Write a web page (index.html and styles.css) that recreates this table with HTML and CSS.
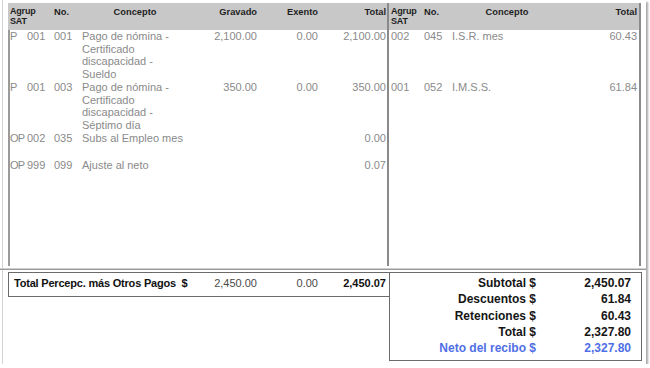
FILE: index.html
```html
<!DOCTYPE html>
<html lang="es">
<head>
<meta charset="utf-8">
<title>Recibo de nómina</title>
<link rel="stylesheet" href="styles.css">
</head>
<body>
<div class="sheet">
  <div class="top">
    <section class="panel left">
      <div class="hdr lgrid">
        <div class="h agrup">Agrup<br>SAT</div>
        <div class="h">No.</div>
        <div class="h ctr">Concepto</div>
        <div class="h num">Gravado</div>
        <div class="h num">Exento</div>
        <div class="h num tot">Total</div>
      </div>
      <div class="body lbody">
        <div class="row lgrid h4">
          <div class="c type">P</div><div class="c">001</div><div class="c">001</div>
          <div class="c">Pago de nómina - Certificado discapacidad - Sueldo</div>
          <div class="c num">2,100.00</div><div class="c num">0.00</div><div class="c num tot">2,100.00</div>
        </div>
        <div class="row lgrid h4">
          <div class="c type">P</div><div class="c">001</div><div class="c">003</div>
          <div class="c">Pago de nómina - Certificado discapacidad - Séptimo día</div>
          <div class="c num">350.00</div><div class="c num">0.00</div><div class="c num tot">350.00</div>
        </div>
        <div class="row lgrid h2">
          <div class="c type">OP</div><div class="c">002</div><div class="c">035</div>
          <div class="c">Subs al Empleo mes</div>
          <div class="c num"></div><div class="c num"></div><div class="c num tot">0.00</div>
        </div>
        <div class="row lgrid h2">
          <div class="c type">OP</div><div class="c">999</div><div class="c">099</div>
          <div class="c">Ajuste al neto</div>
          <div class="c num"></div><div class="c num"></div><div class="c num tot">0.07</div>
        </div>
      </div>
    </section>
    <section class="panel right">
      <div class="hdr rgrid">
        <div class="h agrup">Agrup<br>SAT</div>
        <div class="h">No.</div>
        <div class="h ctr">Concepto</div>
        <div class="h num">Total</div>
      </div>
      <div class="body">
        <div class="row rgrid h4">
          <div class="c">002</div><div class="c">045</div>
          <div class="c">I.S.R. mes</div>
          <div class="c num">60.43</div>
        </div>
        <div class="row rgrid h4">
          <div class="c">001</div><div class="c">052</div>
          <div class="c">I.M.S.S.</div>
          <div class="c num">61.84</div>
        </div>
      </div>
    </section>
  </div>
  <div class="sep"></div>
  <div class="bottom">
    <div class="perc">
      <div class="plabel">Total Percepc. más Otros Pagos&nbsp; $</div>
      <div class="pnum">2,450.00</div>
      <div class="pnum">0.00</div>
      <div class="pnum ptot">2,450.07</div>
    </div>
    <div class="summary">
      <div class="slabel">Subtotal $</div><div class="sval">2,450.07</div>
      <div class="slabel">Descuentos $</div><div class="sval">61.84</div>
      <div class="slabel">Retenciones $</div><div class="sval">60.43</div>
      <div class="slabel">Total $</div><div class="sval">2,327.80</div>
      <div class="slabel neto">Neto del recibo $</div><div class="sval neto">2,327.80</div>
    </div>
  </div>
</div>
</body>
</html>
```
FILE: styles.css
```css
html, body {
  margin: 0;
  padding: 0;
  background: #ffffff;
}
body {
  font-family: "Liberation Sans", Arial, sans-serif;
}
.sheet {
  margin-left: 2px;
  width: 644px;
  height: 364px;
  box-sizing: border-box;
  border-left: 1px solid #d2d2d2;
  padding-top: 3px;
  background: #fff;
  box-shadow: 2px 2px 2px rgba(0, 0, 0, 0.35);
}
.top {
  display: flex;
  margin-left: 5px;
  height: 263px;
}
.panel {
  display: flex;
  flex-direction: column;
  border-right: 2px solid #8a8a8a;
}
.panel.left { width: 379px; }
.panel.right { width: 250px; }
.lgrid {
  display: grid;
  grid-template-columns: 17px 27px 28px 110px 69px 61px 67px;
}
.rgrid {
  display: grid;
  grid-template-columns: 33px 28px 114px 75px;
}
.hdr {
  height: 27px;
  background: #c8c8c8;
  box-sizing: border-box;
  padding-top: 4px;
}
.h {
  font-size: 9.3px;
  font-weight: bold;
  line-height: 11px;
  color: #1e1e1e;
  padding: 0 2px;
  white-space: nowrap;
}
.h.agrup {
  font-size: 9px;
  line-height: 9.5px;
  letter-spacing: -0.2px;
}
.lgrid .h.agrup { grid-column: span 2; }
.h.ctr { text-align: center; }
.num { text-align: right; }
.h.num.tot, .c.num.tot { padding-right: 1px; }
.body {
  flex: 1;
}
.lbody {
  box-shadow: inset 2px 0 #9a9a9a;
}
.row { align-items: start; }
.h4 { height: 50.8px; }
.h2 { height: 27px; }
.c {
  font-size: 11px;
  line-height: 12.7px;
  color: #8a8a8a;
  padding: 0 2px;
}
.c.type {
  letter-spacing: -0.7px;
  white-space: nowrap;
}
.sep {
  margin-top: 2px;
  height: 1px;
  border-top: 1px solid #cfcfcf;
  background: #9a9a9a;
  margin-left: -3px;
}
.bottom {
  display: flex;
  align-items: flex-start;
  margin-left: 5px;
  margin-top: 2px;
}
.perc {
  width: 382px;
  height: 25px;
  box-sizing: border-box;
  border: 1px solid #6a6a6a;
  display: grid;
  grid-template-columns: 181px 69px 61px 69px;
  line-height: 21px;
  font-size: 11px;
}
.plabel {
  font-weight: bold;
  color: #111;
  padding-left: 5px;
  letter-spacing: -0.2px;
  white-space: nowrap;
}
.pnum {
  text-align: right;
  padding-right: 2px;
  color: #4a4a4a;
}
.pnum.ptot {
  font-weight: bold;
  color: #111;
  padding-right: 3px;
}
.summary {
  margin-left: -1px;
  width: 253px;
  height: 89px;
  box-sizing: border-box;
  border: 1px solid #6a6a6a;
  padding-top: 2px;
  display: grid;
  grid-template-columns: 146px 95px;
  grid-auto-rows: 16.25px;
  font-size: 12px;
  font-weight: bold;
  line-height: 16.25px;
  color: #151515;
}
.slabel, .sval { text-align: right; white-space: nowrap; }
.neto { color: #4f6fe6; }
```
